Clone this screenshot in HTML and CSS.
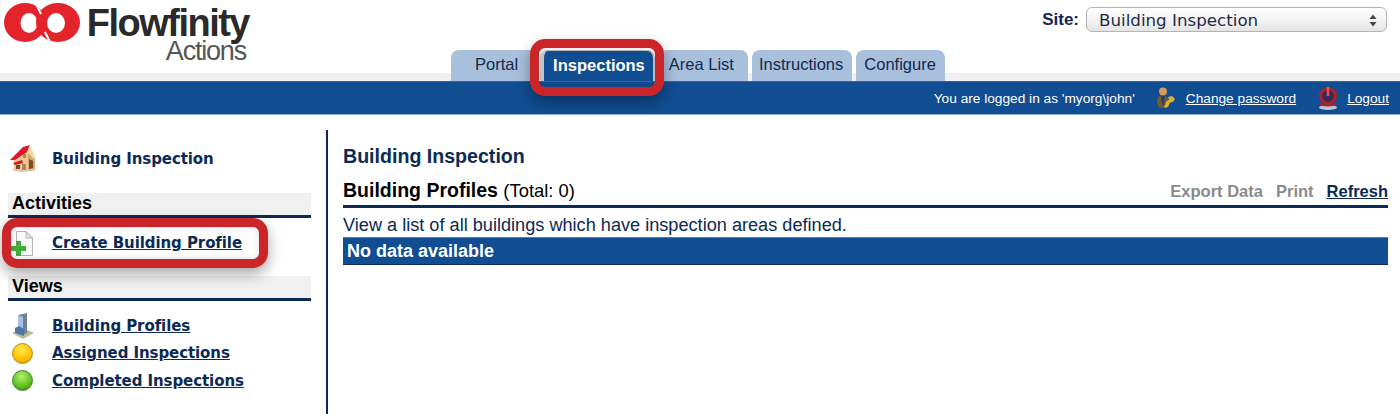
FILE: index.html
```html
<!DOCTYPE html>
<html lang="en">
<head>
  <meta charset="UTF-8">
  <title>Flowfinity Actions</title>
  <link rel="stylesheet" href="styles.css">
</head>
<body>
  <header class="top">
    <div class="logo">
      <svg class="logo-mark" width="84" height="44" viewBox="0 0 84 44">
        <path fill="#e3242b" fill-rule="evenodd" d="M4 21.500A21 19.500 0 0 1 46 21.500A21 19.500 0 0 1 4 21.500ZM20.500 22A8.500 10 0 0 0 37.500 22A8.500 10 0 0 0 20.500 22Z"/>
        <path fill="#e3242b" fill-rule="evenodd" d="M36 21.500A22 19.500 0 0 1 80 21.500A22 19.500 0 0 1 36 21.500ZM47 22A9 10 0 0 0 65 22A9 10 0 0 0 47 22Z"/>
        <path fill="none" stroke="white" stroke-width="2" d="M36 3L41 13M45 31L50 41"/>
      </svg>
      <div class="logo-text">
        <span class="logo-name">Flowfinity</span>
        <span class="logo-sub">Actions</span>
      </div>
    </div>
    <nav class="tabs">
      <a class="tab tab-portal">Portal</a>
      <a class="tab tab-active">Inspections<span class="callout callout-tab"></span></a>
      <a class="tab tab-area">Area List</a>
      <a class="tab tab-instructions">Instructions</a>
      <a class="tab tab-configure">Configure</a>
    </nav>
    <div class="site">
      <label>Site:</label>
      <div class="site-select">
        <span>Building Inspection</span>
        <svg width="8" height="13" viewBox="0 0 8 13"><path fill="#444" d="M4 0.500L7.500 5H0.500ZM4 12.500L0.500 8H7.500Z"/></svg>
      </div>
    </div>
  </header>

  <div class="userbar">
    <span class="userbar-who">You are logged in as 'myorg\john'</span>
    <svg class="icon-user" width="20" height="22" viewBox="0 0 20 22">
      <circle cx="7" cy="4.500" r="4" fill="#d99a55"/>
      <path fill="#7a5a2c" d="M1 15C1 10 3 8.500 7 8.500C10 8.500 12 10 12 13L10 21H3Z"/>
      <path fill="#24406e" d="M5 9H9L8 18H6Z"/>
      <path fill="#e3b12c" d="M8 21L10 15L13 12.500L12 10L16 9L19 12L17 15L14 15.500L12 20Z"/>
    </svg>
    <a class="userbar-link userbar-pass">Change password</a>
    <svg class="icon-power" width="20" height="24" viewBox="0 0 20 24">
      <ellipse cx="10" cy="21.500" rx="9" ry="2.500" fill="#b9c6d6"/>
      <circle cx="10" cy="10" r="7.500" fill="#3a2a58" stroke="#b3202a" stroke-width="3"/>
      <path d="M10 1V10" stroke="#e8545a" stroke-width="2.500"/>
      <path d="M2 18C5 20 15 20 18 18" fill="none" stroke="#b3202a" stroke-width="2"/>
    </svg>
    <a class="userbar-link">Logout</a>
  </div>

  <div class="page">
    <aside class="side">
      <div class="side-row side-app">
        <svg class="side-icon" width="26" height="27" viewBox="0 0 26 27">
          <path fill="#ecc98c" d="M4 13L17 5L25 14V24L11 26L4 24Z"/>
          <path fill="#d8a968" d="M18 8L25 14V24L18 25Z"/>
          <path fill="#e0142a" d="M0 15L13 2L20 0L17 7L5 15Z"/>
          <path fill="#f2d9a8" d="M20 0L26 14L24 14L17 7Z"/>
          <path fill="#e0142a" d="M3 18L12 15L13 18L5 20Z"/>
          <path fill="#7a4a24" d="M6 20H10V24H6ZM19 14L23 16V23L19 24Z"/>
          <path fill="#a98a5e" d="M13 9H16V13H13ZM12 19H16V25H12Z"/>
          <path fill="#c9c2b4" d="M3 24L11 26L25 24V25.500L11 27L3 25.500Z"/>
        </svg>
        <span class="side-app-name">Building Inspection</span>
      </div>

      <h3 class="side-head">Activities</h3>
      <div class="side-row side-create">
        <svg class="side-icon" width="24" height="28" viewBox="0 0 24 28">
          <path fill="#fafafa" stroke="#b5b5b5" d="M6.500 2.500H16L22.500 9V26.500H6.500Z"/>
          <path fill="#e4e4e4" stroke="#b5b5b5" d="M16 2.500V9H22.500Z"/>
          <path fill="#3fae3a" d="M6 12H11V17H16V22H11V27H6V22H1V17H6Z"/>
        </svg>
        <a class="side-link">Create Building Profile</a>
        <span class="callout callout-create"></span>
      </div>

      <h3 class="side-head side-head-views">Views</h3>
      <ul class="side-list">
        <li class="side-row">
          <svg class="side-icon side-icon-tower" width="22" height="26" viewBox="0 0 22 26">
            <path fill="#b5bd9a" d="M0 20L11 15L22 20L11 26Z"/>
            <path fill="#6f8196" d="M6 2L15 0V20L11 22L6 20Z"/>
            <path fill="#a3c0de" d="M6 2L11 4V22L6 20Z"/>
            <path fill="#4f78a8" d="M3 15L7 13L12 16V23L3 20Z"/>
          </svg>
          <a class="side-link">Building Profiles</a>
        </li>
        <li class="side-row">
          <span class="ball ball-yellow"></span>
          <a class="side-link">Assigned Inspections</a>
        </li>
        <li class="side-row">
          <span class="ball ball-green"></span>
          <a class="side-link">Completed Inspections</a>
        </li>
      </ul>
    </aside>

    <main class="main">
      <h1 class="main-title">Building Inspection</h1>
      <div class="list-head">
        <h2>Building Profiles <small>(Total: 0)</small></h2>
        <div class="list-actions">
          <span>Export Data</span>
          <span>Print</span>
          <a>Refresh</a>
        </div>
      </div>
      <p class="list-desc">View a list of all buildings which have inspection areas defined.</p>
      <div class="list-empty">No data available</div>
    </main>
  </div>
</body>
</html>
```

FILE: styles.css
```css
* {
  margin: 0;
  padding: 0;
  box-sizing: border-box;
}

body {
  font-family: "Liberation Sans", Arial, sans-serif;
  background-color: white;
  color: #0b2a55;
  overflow: hidden;
}

/* header */

.top {
  height: 81px;
  display: grid;
  grid-template-columns: 451px 1fr auto;
  background: linear-gradient(white 73px, #f0f0f0 73px);
}

.logo {
  display: flex;
  align-items: flex-start;
}

.logo-mark {
  margin-top: 1px;
  flex: none;
}

.logo-text {
  display: flex;
  flex-direction: column;
  align-items: flex-end;
  margin-left: 3px;
  width: 162px;
}

.logo-name {
  font-size: 38px;
  font-weight: bold;
  letter-spacing: -1.500px;
  line-height: 34px;
  margin-top: 6px;
  color: #2a2a2a;
}

.logo-sub {
  font-size: 27px;
  letter-spacing: -1.200px;
  line-height: 22px;
  margin-right: 3px;
  color: #555;
}

.tabs {
  display: flex;
  align-items: flex-end;
  gap: 4px;
}

.tab {
  position: relative;
  height: 31px;
  padding: 0 8px;
  line-height: 29px;
  font-size: 16.500px;
  color: #13294b;
  background-color: #a8c0dc;
  border-radius: 8px 8px 0 0;
}

.tab-portal {
  padding: 0 18px 0 24px;
}

.tab-active {
  padding: 0 8px 0 9px;
  font-weight: bold;
  color: white;
  background-color: #104d92;
  border-top: 1px solid #bbb;
  border-left: 4px solid #c8c8c8;
  border-right: 2px solid #c8c8c8;
  line-height: 28px;
}

.tab-area {
  padding: 0 14px 0 10px;
}

.tab-instructions {
  padding: 0 9px 0 7px;
}

.tab-configure {
  padding: 0 9px 0 8px;
}

/* red annotation frames */

.callout {
  position: absolute;
  border: 9px solid #cc2529;
  border-radius: 15px;
  box-shadow: 0 6px 14px rgba(0, 0, 0, 0.35), inset 0 0 6px rgba(0, 0, 0, 0.15);
  z-index: 2;
}

.callout-tab {
  left: -14px;
  top: -12px;
  width: 134px;
  height: 57px;
}

.callout-create {
  left: 2px;
  top: 0;
  width: 266px;
  height: 50px;
}

.site {
  display: flex;
  align-items: flex-start;
  gap: 7px;
  padding: 7px 13px 0 0;
}

.site label {
  font-size: 17px;
  font-weight: bold;
  line-height: 25px;
}

.site-select {
  width: 301px;
  height: 25px;
  display: flex;
  align-items: center;
  justify-content: space-between;
  padding: 1px 9px 0 12px;
  font-family: "DejaVu Sans", sans-serif;
  font-size: 16.700px;
  color: #1c2c48;
  background: linear-gradient(white, #f4f4f4 50%, #e4e4e4);
  border: 1px solid #b4b4b4;
  border-radius: 6px;
}

.userbar {
  height: 34px;
  display: flex;
  align-items: center;
  justify-content: flex-end;
  padding-right: 11px;
  font-size: 13.700px;
  color: white;
  background-color: #104d92;
  border-top: 1px solid #2b66a8;
  border-bottom: 1px solid #8fb0d0;
}

.userbar-who {
  margin-right: 21px;
}

.userbar-link {
  text-decoration: underline;
}

.userbar-pass {
  margin: 0 22px 0 10px;
}

.icon-power {
  margin-right: 9px;
}

/* content */

.page {
  display: flex;
  height: 284px;
  margin-top: 15px;
}

.side {
  width: 328px;
  flex: none;
  padding: 14px 15px 0 8px;
  border-right: 2px solid #0b2a55;
  font-family: "DejaVu Sans", sans-serif;
  font-size: 15px;
  font-weight: bold;
  letter-spacing: -0.080px;
}

.side-row {
  position: relative;
  display: flex;
  align-items: center;
  padding-left: 44px;
}

.side-icon {
  position: absolute;
  left: 2px;
}

.side-icon-tower {
  left: 4px;
}

.side-app {
  height: 28px;
  margin-bottom: 21px;
}

.side-app-name {
  padding-top: 2px;
}

.side-head {
  height: 25px;
  padding-left: 4px;
  font-family: "Liberation Sans", Arial, sans-serif;
  font-size: 18px;
  line-height: 21px;
  letter-spacing: normal;
  color: black;
  background-color: #f0f0f0;
  border-bottom: 3px solid #0b2a55;
}

.side-create {
  height: 50px;
  margin-left: -8px;
  padding-left: 52px;
  margin-bottom: 8px;
}

.side-create .side-icon {
  left: 10px;
}

.side-link {
  text-decoration: underline;
}

.side-list {
  list-style: none;
  margin-top: 11px;
}

.side-list .side-row {
  height: 27.500px;
}

.ball {
  position: absolute;
  left: 4px;
  width: 21px;
  height: 21px;
  border-radius: 50%;
}

.ball-yellow {
  background: radial-gradient(circle at 45% 30%, #ffe94d, #ffc000 60%, #c98a00);
  border: 1px solid #b88a10;
}

.ball-green {
  background: radial-gradient(circle at 45% 30%, #b8f06a, #5cbf1e 60%, #2d7a12);
  border: 1px solid #3f7d2a;
}

.main {
  flex: 1;
  padding: 15px 12px 0 15px;
}

.main-title {
  font-size: 19.600px;
  line-height: 23px;
  margin-bottom: 12px;
}

.list-head {
  display: flex;
  align-items: flex-end;
  justify-content: space-between;
  height: 28px;
  padding-bottom: 2px;
  border-bottom: 3px solid #0b2a55;
  color: black;
}

.list-head h2 {
  font-size: 19.500px;
  line-height: 24px;
}

.list-head small {
  font-size: 18.400px;
  font-weight: normal;
}

.list-actions {
  display: flex;
  gap: 13px;
  font-size: 16.500px;
  font-weight: bold;
  line-height: 24px;
  color: #8a8a8a;
}

.list-actions a {
  color: #0b2a55;
  text-decoration: underline;
}

.list-desc {
  font-size: 18.150px;
  line-height: 19px;
  margin: 8px 0 2px;
}

.list-empty {
  height: 28px;
  padding-left: 4px;
  font-size: 18px;
  font-weight: bold;
  line-height: 26px;
  color: white;
  background-color: #104d92;
  border-top: 1px solid #5d7a9c;
  border-bottom: 1px solid #0b2a55;
}
```
